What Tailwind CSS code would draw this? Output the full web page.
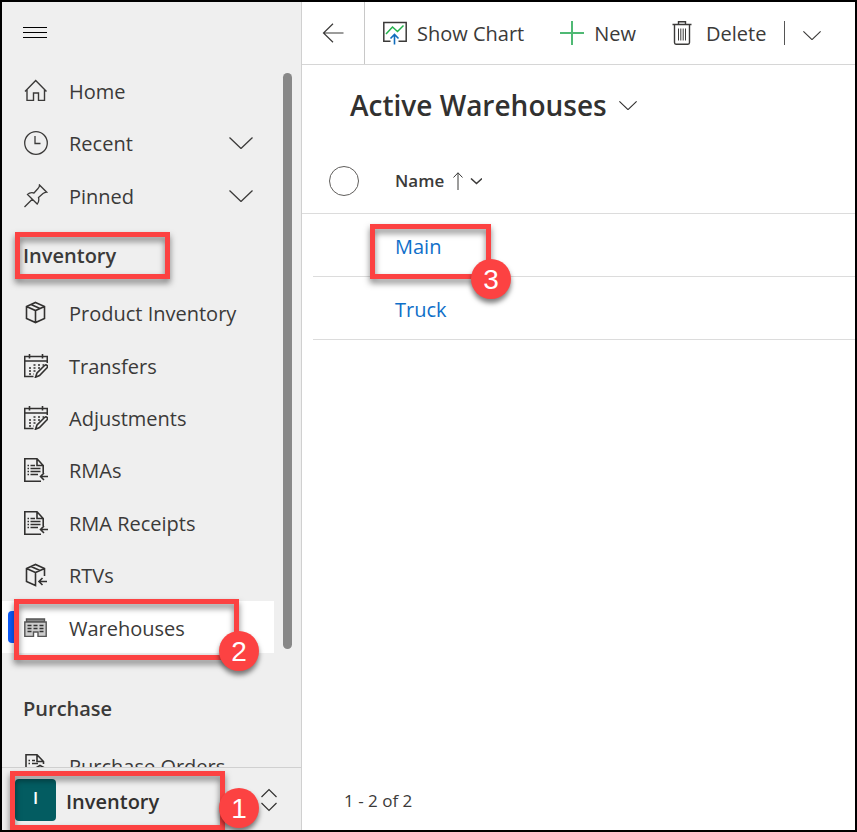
<!DOCTYPE html>
<html lang="en">
<head>
<meta charset="utf-8">
<meta name="viewport" content="width=device-width, initial-scale=1">
<title>Active Warehouses</title>
<script src="https://cdn.jsdelivr.net/npm/@tailwindcss/browser@4"></script>
</head>
<body class="flex h-screen overflow-hidden border-2 border-black bg-white font-['Open_Sans','Noto_Sans',sans-serif] text-[20px] leading-6 font-[380] text-[#3b3a39]">

<svg class="hidden" aria-hidden="true">
  <symbol id="box" viewBox="0 0 24 24"><path d="M11.500 1.500 20.500 5.500V17.500L11.500 21.500 2.500 17.500V5.500ZM2.500 5.500 11.500 9.500 20.500 5.500M11.500 9.500V21.500M7 3.500 16 7.500"/></symbol>
  <symbol id="box-back" viewBox="0 0 24 24"><path d="M20.500 13V5.500L11.500 1.500 2.500 5.500V18.500L11.500 22.500V9.500L2.500 5.500M11.500 9.500 20.500 5.500M7 3.500 16 7.500M23 18.500H15M18.500 15 15 18.500 18.500 22"/></symbol>
  <symbol id="calendar" viewBox="0 0 24 24"><path d="M9.500 22.500H.7V2.500H23.300V9M.7 7H23.300M5.500 0V4.500M18.500 0V4.500"/><path stroke-dasharray="2 2.500" d="M9.500 11H20M5 14H18M5 17H14M5 20H10"/><path fill="#efefef" d="M11.500 23.200 13 19 20.500 11.500Q22 10.300 23.200 11.500 24 12.700 22.800 14L15.500 21.500Z"/></symbol>
  <symbol id="doc-back" viewBox="0 0 24 24"><path d="M17 23.200H.8V.8H13L19.200 7.500V15M13 .8V7.500H19.200M6.500 7.500H11M6.500 10.500H16.500M6.500 13.500H16.500M6.500 16.500H14M3.500 7.500H5M3.500 10.500H5M3.500 13.500H5M3.500 16.500H5M24 18.500H16.500M20 15 16.500 18.500 20 22"/></symbol>
  <symbol id="chevron" viewBox="0 0 24 12"><path d="M.5 .5 12 11.500 23.500 .5"/></symbol>
</svg>

<aside class="flex w-[300px] shrink-0 flex-col border-r border-[#d0d0d0] bg-[#efefef]">
  <button type="button" aria-label="Toggle navigation" class="flex h-[63px] w-[66px] shrink-0 items-center justify-center pb-1">
    <svg class="h-3 w-6" viewBox="0 0 24 12" stroke="#000" shape-rendering="crispEdges"><path d="M0 1.500H24M0 6.500H24M0 11.500H24"/></svg>
  </button>

  <div class="flex min-h-0 flex-1">
    <nav aria-label="Site map" class="min-w-0 flex-1 overflow-hidden">
      <ul class="grid h-[157px] auto-rows-fr">
        <li><a href="#home" class="flex h-full items-center gap-[21px] pl-[22px]">
          <svg class="size-6 shrink-0" viewBox="0 0 24 24" fill="none" stroke="currentColor" stroke-width="1.400"><path d="M1 12.500 11.700 1.500 22.500 12.500M3 10.500V21.400H9.500V14H14.500V21.400H20.500V10.500"/></svg>
          <span class="pt-0.5">Home</span></a></li>
        <li><button type="button" class="flex h-full w-full items-center gap-[21px] pl-[22px] pr-[30px] text-left">
          <svg class="size-6 shrink-0" viewBox="0 0 24 24" fill="none" stroke="currentColor" stroke-width="1.300"><circle cx="12" cy="12" r="11.300"/><path d="M11 5V12.500H16.500"/></svg>
          <span class="flex-1 pt-0.5">Recent</span>
          <svg class="h-3 w-6" fill="none" stroke="currentColor" stroke-width="1.300"><use href="#chevron"/></svg></button></li>
        <li><button type="button" class="flex h-full w-full items-center gap-[21px] pl-[22px] pr-[30px] text-left">
          <svg class="size-6 shrink-0" viewBox="0 0 24 24" fill="none" stroke="currentColor" stroke-width="1.300"><path d="M.5 23 8.500 15M15.500 1 22.700 8.200Q20.500 8.500 19 9.500L14.500 13.500Q15.500 17.500 13.200 20L3.500 10.500Q6 8 10 9L14 4.500Q15.500 3 15.500 1Z"/></svg>
          <span class="flex-1 pt-0.5">Pinned</span>
          <svg class="h-3 w-6" fill="none" stroke="currentColor" stroke-width="1.300"><use href="#chevron"/></svg></button></li>
      </ul>

      <div class="relative flex h-16 items-center pl-[21px] pt-1">
        <h2 class="font-semibold">Inventory</h2>
        <div class="absolute left-[13px] top-[10px] h-[47px] w-[155px] border-5 border-[#fc4242] drop-shadow-[0_4px_3px_rgba(0,0,0,0.5)]"></div>
      </div>

      <ul class="grid h-[367px] auto-rows-fr">
        <li><a href="#products" class="flex h-full items-center gap-[21px] pl-[22px] pt-0.5"><svg class="size-6 shrink-0" fill="none" stroke="#323130" stroke-width="1.600"><use href="#box"/></svg><span class="pt-0.5">Product Inventory</span></a></li>
        <li><a href="#transfers" class="flex h-full items-center gap-[21px] pl-[22px] pt-0.5"><svg class="size-6 shrink-0" fill="none" stroke="#323130" stroke-width="1.600"><use href="#calendar"/></svg><span class="pt-0.5">Transfers</span></a></li>
        <li><a href="#adjustments" class="flex h-full items-center gap-[21px] pl-[22px] pt-0.5"><svg class="size-6 shrink-0" fill="none" stroke="#323130" stroke-width="1.600"><use href="#calendar"/></svg><span class="pt-0.5">Adjustments</span></a></li>
        <li><a href="#rmas" class="flex h-full items-center gap-[21px] pl-[22px] pt-0.5"><svg class="size-6 shrink-0" fill="none" stroke="#323130" stroke-width="1.600"><use href="#doc-back"/></svg><span class="pt-0.5">RMAs</span></a></li>
        <li><a href="#receipts" class="flex h-full items-center gap-[21px] pl-[22px] pt-0.5"><svg class="size-6 shrink-0" fill="none" stroke="#323130" stroke-width="1.600"><use href="#doc-back"/></svg><span class="pt-0.5">RMA Receipts</span></a></li>
        <li><a href="#rtvs" class="flex h-full items-center gap-[21px] pl-[22px] pt-0.5"><svg class="size-6 shrink-0" fill="none" stroke="#323130" stroke-width="1.600"><use href="#box-back"/></svg><span class="pt-0.5">RTVs</span></a></li>
        <li class="relative mr-[9px] bg-white">
          <a href="#warehouses" aria-current="page" class="flex h-full items-center gap-[21px] pl-[22px] pt-0.5">
            <svg class="size-6 shrink-0" viewBox="0 0 24 24" fill="none" stroke="#555" stroke-width="1.400"><path fill="#888" d="M2.500 3H20.500V6H2.500Z"/><path fill="#ccc" d="M.8 6H22.200V20.400H14V16H9.500V20.400H.8Z"/><path stroke="#333" d="M3.500 9.500H7.500M3.500 12.500H7.500M3.500 15.500H7.500M9.500 9.500H13.500M9.500 12.500H13.500M15.500 9.500H19.500M15.500 12.500H19.500M15.500 15.500H19.500"/></svg>
            <span class="pt-0.5">Warehouses</span></a>
          <span class="absolute left-1.5 top-2.5 h-8 w-1.5 rounded-l-sm bg-[#0b5cff]"></span>
          <div class="absolute -top-0.5 left-3 z-10 h-[61px] w-[225px] border-5 border-[#fc4242] drop-shadow-[0_4px_3px_rgba(0,0,0,0.5)]"></div>
          <span class="absolute left-[217px] top-[30px] z-10 flex size-10 items-center justify-center rounded-full bg-[#fc4242] pt-0.5 font-['Liberation_Sans',sans-serif] text-[28px] text-white shadow-[0_4px_5px_rgba(0,0,0,0.5)]">2</span>
        </li>
      </ul>

      <h2 class="flex h-[87px] items-center pl-[21px] pt-6 font-semibold">Purchase</h2>
      <a href="#orders" class="flex h-[52px] items-center gap-[21px] pl-[22px]">
        <svg class="size-6 shrink-0" viewBox="0 0 24 24" fill="none" stroke="#323130" stroke-width="1.600"><path d="M2 23V.8H13L19.500 7.500V10M13 .8V7.500H19.500M8 6.500H11M8 9.500H14M4.500 6.500H6M4.500 9.500H6M10 15 16 11.500 22.500 15"/></svg>
        <span class="pt-0.5">Purchase Orders</span></a>
    </nav>
    <div class="mr-[9px] mt-2 h-[576px] w-[9px] shrink-0 rounded-full bg-[#888]"></div>
  </div>

  <div class="relative flex h-[63px] shrink-0 items-center border-t border-[#d0d0d0] pl-[13px] pr-6 pt-0.5">
    <span class="flex h-[42px] w-[41px] items-center justify-center rounded-sm bg-[#035c61] pb-1 text-[17px] font-semibold text-white">I</span>
    <button type="button" class="flex flex-1 items-center justify-between pl-[10px] text-left font-semibold text-[#323130]">
      <span class="pt-1">Inventory</span>
      <svg class="h-6 w-4" viewBox="0 0 16 24" fill="none" stroke="currentColor" stroke-width="1.200"><path d="M.5 9 8 1.500 15.500 9M.5 15 8 22.500 15.500 15"/></svg>
    </button>
    <div class="absolute left-2 top-[3px] h-[59px] w-[215px] border-5 border-[#fc4242] drop-shadow-[0_4px_3px_rgba(0,0,0,0.5)]"></div>
    <span class="absolute left-[217px] top-5 flex size-10 items-center justify-center rounded-full bg-[#fc4242] pt-0.5 font-['Liberation_Sans',sans-serif] text-[28px] text-white shadow-[0_4px_5px_rgba(0,0,0,0.5)]">1</span>
  </div>
</aside>

<main class="flex min-w-0 flex-1 flex-col">
  <div role="toolbar" aria-label="Commands" class="flex h-[63px] shrink-0 items-center border-b border-[#d6d6d6]">
    <button type="button" aria-label="Back" class="flex h-full w-[63px] items-center justify-center border-r border-[#c8c8c8]">
      <svg class="h-5 w-[22px]" viewBox="0 0 22 20" fill="none" stroke="currentColor" stroke-width="1.200"><path d="M21.500 10H1.500M11 .8 1.500 10 11 19.200"/></svg>
    </button>
    <button type="button" class="ml-[18px] flex items-center gap-[10px]">
      <svg class="size-6" viewBox="0 0 24 24" fill="none"><path stroke="#3b3a39" stroke-width="1.500" d="M7.500 20.200H.8V1.500H23.200V20.200H15.500"/><path stroke="#22b14c" stroke-width="1.500" d="M3 13 9.500 6 14.500 10.500 20.500 4.500"/><path stroke="#0f6cbd" stroke-width="1.600" d="M11.500 23.500V13.500M7.500 17.500 11.500 13.500 15.500 17.500"/></svg>
      <span class="pt-0.5">Show Chart</span></button>
    <button type="button" class="ml-9 flex items-center gap-[10px]">
      <svg class="size-6" viewBox="0 0 24 24" stroke="#4fb974" stroke-width="2" shape-rendering="crispEdges"><path d="M12 0V24M0 12H24"/></svg>
      <span class="pt-0.5">New</span></button>
    <button type="button" class="ml-[34px] flex items-center gap-3">
      <svg class="size-6" viewBox="0 0 24 24" fill="none" stroke="currentColor" stroke-width="1.400"><path d="M2.500 3.500H21.500M8.500 3V.8H15.500V3M4.500 3.500V21.500Q4.500 23.200 6 23.200H18Q19.500 23.200 19.500 21.500V3.500"/><path stroke-width="1" d="M8.500 7.500V19.500M10.800 7.500V19.500M13.200 7.500V19.500M15.500 7.500V19.500"/></svg>
      <span class="pt-0.5">Delete</span></button>
    <span class="ml-[18px] h-6 w-px bg-[#555]"></span>
    <button type="button" aria-label="More commands" class="ml-[18px] pt-1"><svg class="h-[9px] w-[18px]" fill="none" stroke="currentColor" stroke-width="1.500"><use href="#chevron"/></svg></button>
  </div>

  <header class="flex h-[84px] shrink-0 items-center pb-1 pl-12">
    <button type="button" class="flex items-center gap-3 text-[#323130]">
      <h1 class="text-[28px] leading-9 font-semibold">Active Warehouses</h1>
      <svg class="h-[9px] w-[18px]" fill="none" stroke="currentColor" stroke-width="1.500"><use href="#chevron"/></svg>
    </button>
  </header>

  <table class="w-full table-fixed">
    <thead>
      <tr class="h-16 border-b border-[#dcdcdc]">
        <th scope="col" class="w-[93px] pl-[27px]"><input type="checkbox" aria-label="Select all rows" class="block size-[30px] appearance-none rounded-full border border-[#605e5c]"></th>
        <th scope="col" class="text-left"><button type="button" class="flex items-center gap-2 text-[17px] font-semibold">Name
          <svg class="h-[18px] w-[30px]" viewBox="0 0 30 18" fill="none" stroke="currentColor"><path d="M6 18V.8M1.500 5.500 6 .8 10.500 5.500"/><path stroke-width="1.600" d="M19 6.500 24.500 11.500 30 6.500"/></svg></button></th>
      </tr>
    </thead>
    <tbody class="text-[#0f6fc9]">
      <tr>
        <td class="pl-[11px]"><div class="h-[63px] border-b border-[#dcdcdc]"></div></td>
        <td><div class="relative flex h-[63px] items-center border-b border-[#dcdcdc] pt-1"><a href="#main">Main</a>
          <div class="absolute -left-[25px] top-[10px] h-[55px] w-[121px] border-5 border-[#fc4242] drop-shadow-[0_4px_3px_rgba(0,0,0,0.5)]"></div>
          <span class="absolute left-[76px] top-[45px] flex size-10 items-center justify-center rounded-full bg-[#fc4242] pt-0.5 font-['Liberation_Sans',sans-serif] text-[28px] text-white shadow-[0_4px_5px_rgba(0,0,0,0.5)]">3</span></div></td>
      </tr>
      <tr>
        <td class="pl-[11px]"><div class="h-[63px] border-b border-[#dcdcdc]"></div></td>
        <td><div class="flex h-[63px] items-center border-b border-[#dcdcdc] pt-1"><a href="#truck">Truck</a></div></td>
      </tr>
    </tbody>
  </table>

  <footer class="mt-auto flex h-[58px] items-center pl-[42px] text-[17px]">1 - 2 of 2</footer>
</main>
</body>
</html>
